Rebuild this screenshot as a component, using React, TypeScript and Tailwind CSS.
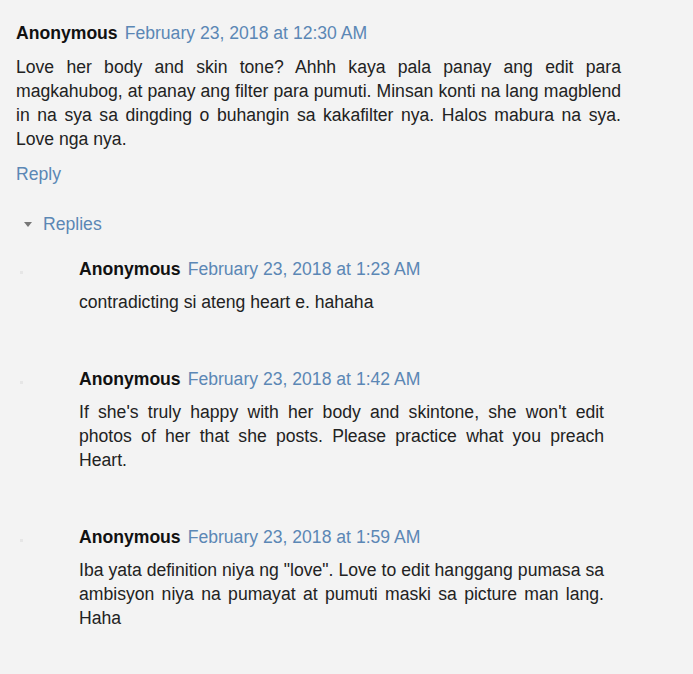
type Comment = {
  author: string;
  date: string;
  body: string;
};

const top: Comment = {
  author: "Anonymous",
  date: "February 23, 2018 at 12:30 AM",
  body: "Love her body and skin tone? Ahhh kaya pala panay ang edit para magkahubog, at panay ang filter para pumuti. Minsan konti na lang magblend in na sya sa dingding o buhangin sa kakafilter nya. Halos mabura na sya. Love nga nya.",
};

const replies: Comment[] = [
  {
    author: "Anonymous",
    date: "February 23, 2018 at 1:23 AM",
    body: "contradicting si ateng heart e. hahaha",
  },
  {
    author: "Anonymous",
    date: "February 23, 2018 at 1:42 AM",
    body: "If she's truly happy with her body and skintone, she won't edit photos of her that she posts. Please practice what you preach Heart.",
  },
  {
    author: "Anonymous",
    date: "February 23, 2018 at 1:59 AM",
    body: 'Iba yata definition niya ng "love". Love to edit hanggang pumasa sa ambisyon niya na pumayat at pumuti maski sa picture man lang. Haha',
  },
];

function Header({ c }: { c: Comment }) {
  return (
    <div className="flex h-6 items-center gap-[7px] leading-6">
      <span className="font-bold text-[#111]">{c.author}</span>
      <span className="text-[#5b87b5]">{c.date}</span>
    </div>
  );
}

export default function App() {
  return (
    <div
      className="min-h-[674px] w-full bg-[#f3f3f3] pl-4 pt-[21px] text-[17.6px] text-[#222]"
      style={{ fontFamily: '"Liberation Sans", Arial, sans-serif' }}
    >
      <div className="w-[605px]">
        <Header c={top} />
        <p className="mt-[10px] text-justify leading-6">{top.body}</p>
        <div className="mt-[11px] leading-6 text-[#5b87b5]">Reply</div>
        <div className="mt-[26px] flex items-center leading-6 text-[#5b87b5]">
          <span className="ml-2 mr-[11px] h-0 w-0 border-x-4 border-t-[5px] border-x-transparent border-t-[#777]" />
          Replies
        </div>
        <div className="mt-[21px] flex flex-col gap-[53px]">
          {replies.map((r, i) => (
            <div key={i} className="relative pl-[63px]">
              <span className="absolute left-[4px] top-[14px] h-[3px] w-[3px] bg-[#e6e6e6]" />
              <div className="w-[525px]">
                <Header c={r} />
                <p className="mt-[9px] text-justify leading-6">{r.body}</p>
              </div>
            </div>
          ))}
        </div>
      </div>
    </div>
  );
}
